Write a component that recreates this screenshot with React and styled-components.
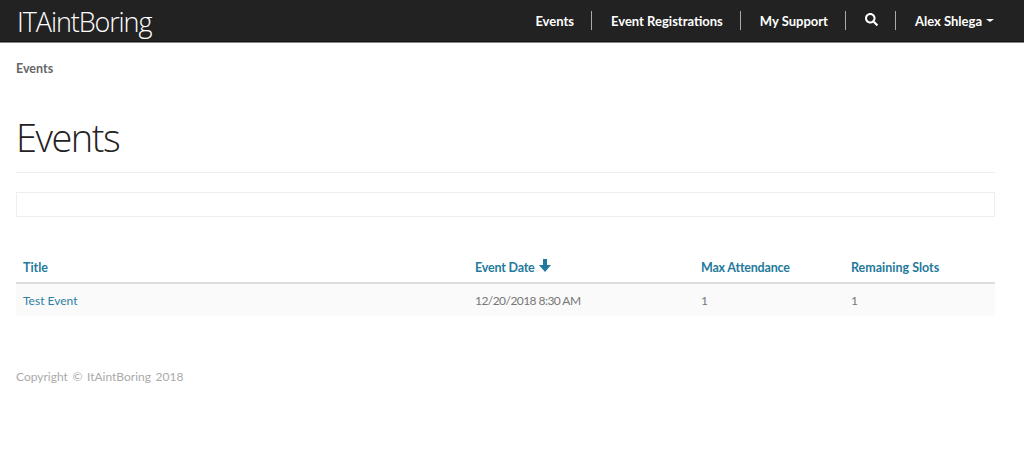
import React from 'react'
import styled, { createGlobalStyle } from 'styled-components'
import { FaSearch } from 'react-icons/fa'

const GlobalStyle = createGlobalStyle`
    body{
        margin: 0;
        background: #fff;
        font-family: "Lato", "Liberation Sans", sans-serif;
        font-size: 12px;
        color: #666;
    }
`

const Navbar = styled.nav`
    height: 41px;
    background: #222;
    border-bottom: 1px solid #111;
    box-shadow: 0 1px 0 #888;
    margin-bottom: 1px;
    display: flex;
    align-items: center;
    justify-content: space-between;
    padding: 0 30px 0 17px;
`

const Brand = styled.a`
    margin-top: 2px;
    font-family: "Open Sans", sans-serif;
    font-weight: 300;
    font-size: 27px;
    letter-spacing: -1.1px;
    color: #fff;
`

const NavList = styled.ul`
    display: flex;
    align-items: center;
    list-style: none;
    margin: 0;
    padding: 0;
`

const NavItem = styled.li`
    display: flex;
    align-items: center;
    height: 19px;
    padding: 0 17px 0 19px;
    color: #fff;
    font-size: 13px;
    font-weight: 700;
    border-left: ${p => (p.$first ? 'none' : '1px solid #aaa')};
    svg{
        margin-top: -2px;
    }
    &:last-child{
        padding-right: 0;
    }
`

const Caret = styled.span`
    width: 0;
    height: 0;
    margin-left: 4px;
    border-top: 3px solid #fff;
    border-left: 4px solid transparent;
    border-right: 4px solid transparent;
`

const Page = styled.main`
    padding: 0 29px 0 16px;
`

const Breadcrumb = styled.div`
    padding-top: 18px;
    font-size: 12.5px;
    line-height: 15px;
    font-weight: 700;
    color: #666;
`

const PageHeader = styled.div`
    margin-top: 36px;
    padding-bottom: 10px;
    border-bottom: 1px solid #eee;
`

const Title = styled.h1`
    margin: 0;
    font-family: "Open Sans", sans-serif;
    font-weight: 300;
    font-size: 38px;
    line-height: 50px;
    letter-spacing: -1.5px;
    color: #222;
`

const EmptyBar = styled.div`
    height: 23px;
    margin-top: 19px;
    border: 1px solid #eee;
`

const Table = styled.table`
    width: 100%;
    margin-top: 33px;
    border-collapse: collapse;
    table-layout: fixed;
    font-size: 12px;
`

const HeadCell = styled.th`
    box-sizing: border-box;
    width: ${p => p.$width}px;
    height: 33px;
    padding: 2px 7px 0;
    text-align: left;
    font-size: 12.5px;
    font-weight: 700;
    letter-spacing: ${p => (p.$tight ? '-0.2px' : '0')};
    color: #1f7a9c;
    border-bottom: 2px solid #ddd;
`

const SortArrow = styled.svg`
    width: 12px;
    height: 13px;
    margin-left: 4px;
    vertical-align: 0;
    fill: #1f7a9c;
`

const Row = styled.tr`
    background: #fafafa;
`

const Cell = styled.td`
    height: 32px;
    padding: 0 7px;
    letter-spacing: ${p => (p.$tight ? '-0.55px' : '0')};
    color: #777;
`

const EventLink = styled.a`
    color: #2b7fa3;
`

const Footer = styled.footer`
    margin-top: 53px;
    font-size: 12px;
    word-spacing: 1.5px;
    color: #aaa;
`

function App() {
    return (
        <>
            <GlobalStyle />
            <Navbar>
                <Brand>ITAintBoring</Brand>
                <NavList>
                    <NavItem $first>Events</NavItem>
                    <NavItem>Event Registrations</NavItem>
                    <NavItem>My Support</NavItem>
                    <NavItem><FaSearch size={13} /></NavItem>
                    <NavItem>Alex Shlega<Caret /></NavItem>
                </NavList>
            </Navbar>
            <Page>
                <Breadcrumb>Events</Breadcrumb>
                <PageHeader>
                    <Title>Events</Title>
                </PageHeader>
                <EmptyBar />
                <Table>
                    <thead>
                        <tr>
                            <HeadCell $width={452}>Title</HeadCell>
                            <HeadCell $width={226} $tight>
                                Event Date
                                <SortArrow viewBox="0 0 12 13"><path d="M4 0h4v6h4l-6 7-6-7h4z" /></SortArrow>
                            </HeadCell>
                            <HeadCell $width={150} $tight>Max Attendance</HeadCell>
                            <HeadCell>Remaining Slots</HeadCell>
                        </tr>
                    </thead>
                    <tbody>
                        <Row>
                            <Cell><EventLink>Test Event</EventLink></Cell>
                            <Cell $tight>12/20/2018 8:30 AM</Cell>
                            <Cell>1</Cell>
                            <Cell>1</Cell>
                        </Row>
                    </tbody>
                </Table>
                <Footer>Copyright © ItAintBoring 2018</Footer>
            </Page>
        </>
    )
}

export default App
